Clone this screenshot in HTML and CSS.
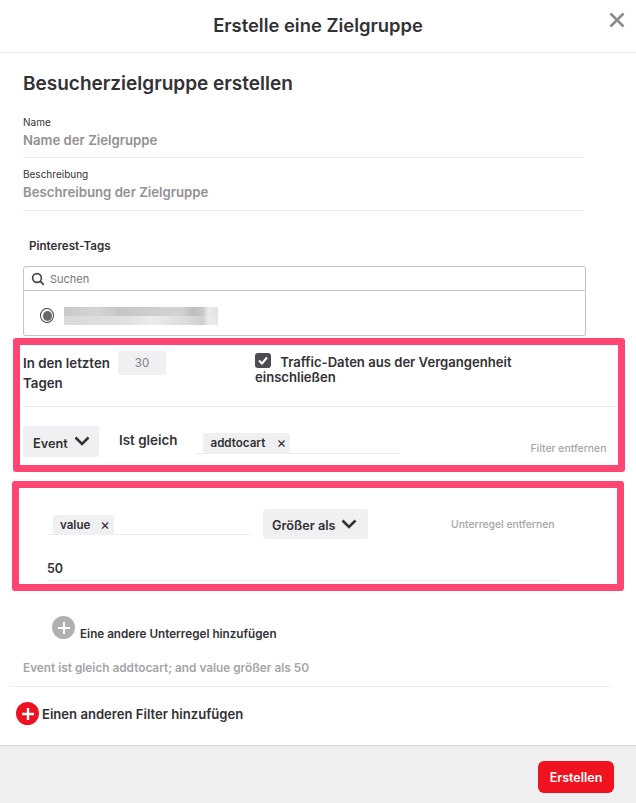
FILE: index.html
```html
<!DOCTYPE html>
<html lang="de">
<head>
    <meta charset="UTF-8">
    <meta name="viewport" content="width=device-width, initial-scale=1.0">
    <title>Erstelle eine Zielgruppe</title>
    <link rel="stylesheet" href="styles.css">
</head>
<body>
    <div class="modal">
        <!-- Kopfzeile -->
        <header class="modal-header">
            <h1>Erstelle eine Zielgruppe</h1>
            <svg class="close-icon" width="16" height="16" viewBox="0 0 16 16"><path d="M1.5 1.5l13 13M14.5 1.5l-13 13" stroke="#8b8b8e" stroke-width="2.6" fill="none"/></svg>
        </header>

        <main class="modal-body">
            <h2>Besucherzielgruppe erstellen</h2>

            <div class="field field-name">
                <label>Name</label>
                <div class="placeholder">Name der Zielgruppe</div>
            </div>
            <div class="field">
                <label>Beschreibung</label>
                <div class="placeholder">Beschreibung der Zielgruppe</div>
            </div>

            <div class="tags-title">Pinterest-Tags</div>
            <div class="search-box">
                <svg width="14" height="14" viewBox="0 0 14 14"><circle cx="6" cy="6" r="4.4" stroke="#444" stroke-width="1.6" fill="none"/><path d="M9.2 9.2l3.6 3.6" stroke="#444" stroke-width="1.8"/></svg>
                <span>Suchen</span>
            </div>
            <div class="tag-list">
                <span class="radio"><span class="radio-dot"></span></span>
                <div class="blurred">
                    <span class="blur-a"></span>
                    <span class="blur-b"></span>
                </div>
            </div>

            <!-- Filter -->
            <section class="highlight filter-box">
                <div class="days-row">
                    <div class="days-label">In den letzten Tagen</div>
                    <div class="days-input">30</div>
                    <div class="traffic">
                        <svg class="checkbox" width="16" height="15" viewBox="0 0 16 15"><rect width="16" height="15" rx="3" fill="#4f4b52"/><path d="M4 7.5l3 3 5-6" stroke="#fff" stroke-width="2" fill="none"/></svg>
                        Traffic-Daten aus der Vergangenheit einschließen
                    </div>
                </div>
                <div class="event-row">
                    <div class="select select-event">Event
                        <svg width="16" height="10" viewBox="0 0 16 10"><path d="M1.5 1.5L8 8l6.5-6.5" stroke="#333" stroke-width="2.6" fill="none"/></svg>
                    </div>
                    <div class="equals">Ist gleich</div>
                    <div class="tag-input tag-input-event">
                        <span class="chip">addtocart <span class="chip-x">×</span></span>
                    </div>
                    <a class="remove-link remove-filter" href="#">Filter entfernen</a>
                </div>
            </section>

            <!-- Unterregel -->
            <section class="highlight rule-box">
                <div class="rule-row">
                    <div class="tag-input tag-input-value">
                        <span class="chip">value <span class="chip-x">×</span></span>
                    </div>
                    <div class="select select-compare">Größer als
                        <svg width="16" height="10" viewBox="0 0 16 10"><path d="M1.5 1.5L8 8l6.5-6.5" stroke="#333" stroke-width="2.6" fill="none"/></svg>
                    </div>
                    <a class="remove-link remove-rule" href="#">Unterregel entfernen</a>
                </div>
                <div class="value-input">50</div>
            </section>

            <div class="add-rule">
                <span class="plus plus-grey">
                    <svg width="14" height="14" viewBox="0 0 14 14"><path d="M7 1v12M1 7h12" stroke="#fff" stroke-width="2"/></svg>
                </span>
                <span class="add-rule-text">Eine andere Unterregel hinzufügen</span>
            </div>

            <p class="summary">Event ist gleich addtocart; and value größer als 50</p>

            <div class="add-filter">
                <span class="plus plus-red">
                    <svg width="14" height="14" viewBox="0 0 14 14"><path d="M7 1v12M1 7h12" stroke="#fff" stroke-width="2.4"/></svg>
                </span>
                Einen anderen Filter hinzufügen
            </div>
        </main>

        <footer class="modal-footer">
            <button type="button">Erstellen</button>
        </footer>
    </div>
</body>
</html>
```

FILE: styles.css
```css
* {
    box-sizing: border-box;
}

body {
    margin: 0;
    font-family: Inter, "Liberation Sans", sans-serif;
    color: #333136;
    background-color: #ffffff;
}

.modal {
    width: 636px;
    height: 803px;
    display: flex;
    flex-direction: column;
    overflow: hidden;
}

.modal-header {
    position: relative;
    height: 53px;
    flex: none;
    display: flex;
    justify-content: center;
    align-items: center;
    border-bottom: 1px solid #ececec;
    padding-bottom: 3px;
}

.modal-header h1 {
    margin: 0;
    font-size: 18.4px;
    font-weight: 600;
}

.close-icon {
    position: absolute;
    top: 12px;
    right: 11px;
}

.modal-body {
    flex: 1;
    padding: 0 0 0 23px;
}

.modal-body h2 {
    margin: 20px 0 0;
    font-size: 19px;
    line-height: 22px;
    font-weight: 600;
}

.field {
    width: 561px;
    height: 53px;
    border-bottom: 1px solid #ececec;
}

.field-name {
    margin-top: 21px;
    height: 42px;
}

.field label {
    display: block;
    font-size: 10px;
    line-height: 12px;
}

.field-name + .field {
    padding-top: 10px;
}

.placeholder {
    margin-top: 4px;
    font-size: 13.2px;
    line-height: 16px;
    font-weight: 600;
    color: #929196;
}

.tags-title {
    margin: 28px 0 0 6px;
    font-size: 11.6px;
    line-height: 14px;
    font-weight: 600;
}

.search-box {
    margin-top: 13px;
    width: 563px;
    height: 25px;
    display: flex;
    align-items: center;
    gap: 5px;
    padding-left: 7px;
    border: 1px solid #c4c4c6;
    border-radius: 3px 3px 0 0;
    font-size: 11px;
    color: #77767a;
}

.tag-list {
    width: 563px;
    height: 45px;
    display: flex;
    align-items: center;
    gap: 10px;
    padding: 5px 0 0 16px;
    border: 1px solid #c4c4c6;
    border-top: none;
    border-radius: 0 0 3px 3px;
}

.radio {
    width: 14px;
    height: 15px;
    display: flex;
    justify-content: center;
    align-items: center;
    border: 1.5px solid #444;
    border-radius: 50%;
}

.radio-dot {
    width: 9px;
    height: 10px;
    background-color: #67666b;
    border-radius: 50%;
}

.blurred {
    width: 154px;
    height: 18px;
    display: flex;
    flex-direction: column;
    overflow: hidden;
}

.blur-a {
    height: 9px;
    background: linear-gradient(90deg, #c9c9cb, #d4d4d6 22%, #c6c6c8 36%, #cfcfd1 60%, #d2d2d4 76%, #bdbdbf 84%, #c8c8ca 90%, #ebebed 94%, #e2e2e4);
}

.blur-b {
    height: 9px;
    background: linear-gradient(90deg, #dadadc, #e0e0e2 40%, #ebebed 58%, #dcdcde 78%, #cfcfd1 90%, #ececee 94%, #e6e6e8);
}

.highlight {
    margin-left: -11px;
    border: 7px solid #ff4672;
    border-radius: 3px;
    background-color: #ffffff;
}

.filter-box {
    margin-top: 2px;
    margin-left: -10px;
    width: 612px;
    height: 134px;
}

.days-row {
    height: 62px;
    display: flex;
    align-items: flex-start;
    margin-left: 3px;
    border-bottom: 1px solid #ececec;
}

.days-label {
    width: 95px;
    margin-top: 8px;
    font-size: 13.3px;
    line-height: 20px;
    font-weight: 600;
}

.days-input {
    width: 48px;
    height: 24px;
    margin-top: 6px;
    text-align: center;
    font-size: 11.5px;
    line-height: 25px;
    color: #807f84;
    background-color: #f0f0f2;
    border-radius: 3px;
}

.traffic {
    width: 290px;
    margin: 8px 0 0 89px;
    font-size: 13.1px;
    line-height: 15px;
    font-weight: 600;
}

.checkbox {
    vertical-align: -1px;
    margin-right: 6px;
}

.event-row {
    display: flex;
    align-items: flex-start;
    margin-left: 3px;
    padding-top: 19px;
}

.select {
    display: flex;
    align-items: center;
    gap: 6px;
    padding-top: 3px;
    font-size: 12.7px;
    font-weight: 600;
    background-color: #f0f0f2;
    border-radius: 3px;
}

.select svg {
    margin-bottom: 4px;
}

.select-event {
    width: 76px;
    height: 31px;
    padding-left: 10px;
}

.equals {
    margin: 6px 0 0 20px;
    font-size: 13.4px;
    line-height: 16px;
    font-weight: 600;
}

.tag-input {
    border-bottom: 1px solid #ececec;
}

.tag-input-event {
    width: 204px;
    height: 28px;
    margin-left: 19px;
    padding: 5px 0 0 7px;
}

.chip {
    display: inline-flex;
    align-items: center;
    justify-content: space-between;
    height: 20px;
    padding: 0 4px 0 7px;
    font-size: 11.6px;
    font-weight: 600;
    background-color: #f0f0f2;
    border-radius: 3px;
}

.tag-input-event .chip {
    width: 87px;
}

.chip-x {
    margin-bottom: 2px;
    font-size: 15px;
    font-weight: 400;
}

.remove-link {
    font-size: 10.4px;
    font-weight: 500;
    color: #a5a5a8;
    text-decoration: none;
    white-space: nowrap;
}

.remove-filter {
    margin: 16px 0 0 130px;
}

.rule-box {
    margin-top: 9px;
    width: 612px;
    height: 110px;
    padding: 21px 0 0 29px;
}

.rule-row {
    display: flex;
    align-items: flex-start;
}

.tag-input-value {
    width: 202px;
    height: 26px;
    padding: 4px 0 0 5px;
}

.tag-input-value .chip {
    width: 61px;
}

.select-compare {
    width: 105px;
    height: 30px;
    margin-left: 13px;
    padding-left: 9px;
}

.remove-rule {
    margin: 9px 0 0 83px;
}

.value-input {
    width: 512px;
    height: 24px;
    margin-top: 18px;
    font-size: 12.5px;
    line-height: 24px;
    font-weight: 600;
    border-bottom: 1px solid #ececec;
    text-indent: -1px;
}

.plus {
    display: inline-flex;
    justify-content: center;
    align-items: center;
    flex: none;
    width: 23px;
    height: 23px;
    border-radius: 50%;
}

.plus-grey {
    background-color: #b0b0b2;
}

.plus-red {
    background-color: #ee1122;
}

.add-rule {
    display: flex;
    align-items: flex-start;
    gap: 5px;
    margin: 25px 0 0 29px;
}

.add-rule-text {
    margin-top: 11px;
    font-size: 11.7px;
    line-height: 14px;
    font-weight: 600;
}

.summary {
    margin: 20px 0 0 -13px;
    width: 600px;
    height: 26px;
    padding-left: 13px;
    font-size: 11.8px;
    line-height: 14px;
    font-weight: 600;
    color: #a5a5a8;
    border-bottom: 1px solid #ececec;
}

.add-filter {
    display: flex;
    align-items: center;
    gap: 3px;
    margin: 15px 0 0 -7px;
    font-size: 13.1px;
    font-weight: 600;
}

.modal-footer {
    height: 58px;
    flex: none;
    display: flex;
    justify-content: flex-end;
    padding: 15px 22px 0 0;
    background-color: #f0eff2;
    border-top: 1px solid #d9d9db;
}

.modal-footer button {
    width: 76px;
    height: 32px;
    padding: 0;
    font-family: inherit;
    font-size: 12.5px;
    font-weight: 600;
    color: #ffffff;
    background-color: #f0131f;
    border: none;
    border-radius: 6px;
}
```
